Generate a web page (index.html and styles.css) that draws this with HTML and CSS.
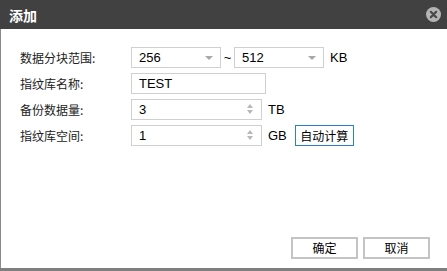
FILE: index.html
```html
<!DOCTYPE html>
<html lang="zh-CN">
<head>
    <meta charset="UTF-8">
    <title>添加</title>
    <link rel="stylesheet" href="styles.css">
</head>
<body>
    <div class="dialog">
        <div class="dialog__header">
            <span class="dialog__title">添加</span>
            <span class="dialog__close">
                <svg width="15" height="15" viewBox="0 0 15 15">
                    <circle cx="7.5" cy="7.5" r="7.5" fill="#b4b4b4"/>
                    <path d="M4.8 4.8 L10.2 10.2 M10.2 4.8 L4.8 10.2" stroke="#474747" stroke-width="2.2" stroke-linecap="round"/>
                </svg>
            </span>
        </div>
        <div class="dialog__body">
            <div class="form">
                <div class="form__row">
                    <label class="form__label">数据分块范围:</label>
                    <div class="field field--select">
                        <span class="field__value">256</span>
                        <span class="field__arrow"></span>
                    </div>
                    <span class="form__tilde">~</span>
                    <div class="field field--select">
                        <span class="field__value">512</span>
                        <span class="field__arrow"></span>
                    </div>
                    <span class="form__unit">KB</span>
                </div>
                <div class="form__row">
                    <label class="form__label">指纹库名称:</label>
                    <div class="field field--text">
                        <span class="field__value">TEST</span>
                    </div>
                </div>
                <div class="form__row">
                    <label class="form__label">备份数据量:</label>
                    <div class="field field--number">
                        <span class="field__value">3</span>
                        <span class="field__spin"><i class="spin--up"></i><i class="spin--down"></i></span>
                    </div>
                    <span class="form__unit">TB</span>
                </div>
                <div class="form__row">
                    <label class="form__label">指纹库空间:</label>
                    <div class="field field--number">
                        <span class="field__value">1</span>
                        <span class="field__spin"><i class="spin--up"></i><i class="spin--down"></i></span>
                    </div>
                    <span class="form__unit">GB</span>
                    <button class="btn-auto">自动计算</button>
                </div>
            </div>
            <div class="dialog__footer">
                <button class="btn">确定</button>
                <button class="btn">取消</button>
            </div>
        </div>
    </div>
</body>
</html>
```

FILE: styles.css
```css
body {
    margin: 0;
    font-family: "Liberation Sans", "Noto Sans CJK SC", sans-serif;
    color: #000;
}
.dialog {
    display: flex;
    flex-direction: column;
    height: 100vh;
    box-sizing: border-box;
    border-bottom: 3px solid #7f7f7f;
    background: #fff;
}
.dialog__header {
    height: 29px;
    display: flex;
    align-items: center;
    justify-content: space-between;
    padding: 0 6px 0 9px;
    background-color: #414141;
}
.dialog__title {
    font-family: "Noto Sans CJK SC", sans-serif;
    font-size: 14px;
    font-weight: bold;
    color: #fff;
}
.dialog__close {
    display: flex;
}
.dialog__body {
    flex: 1;
    display: flex;
    flex-direction: column;
    justify-content: space-between;
    border-left: 1px solid #8a8a8a;
}
.form {
    display: flex;
    flex-direction: column;
    gap: 5px;
    padding: 18px 0 0 19px;
}
.form__row {
    display: flex;
    align-items: center;
    height: 21px;
}
.form__label {
    width: 111px;
    font-family: "Noto Sans CJK SC", sans-serif;
    font-size: 12px;
    color: #222;
}
.field {
    position: relative;
    box-sizing: border-box;
    height: 21px;
    border: 1px solid #d0d0d0;
    display: flex;
    align-items: center;
    padding-left: 7px;
    font-size: 13px;
}
.field--select {
    width: 90px;
}
.field--text {
    width: 135px;
}
.field--number {
    width: 131px;
}
.field__arrow {
    position: absolute;
    right: 7px;
    top: 8px;
    border-left: 4px solid transparent;
    border-right: 4px solid transparent;
    border-top: 4px solid #a8a8a8;
}
.field__spin {
    position: absolute;
    right: 8px;
    top: 4px;
    display: flex;
    flex-direction: column;
    gap: 2px;
}
.spin--up {
    border-left: 3px solid transparent;
    border-right: 3px solid transparent;
    border-bottom: 4px solid #b8b8b8;
}
.spin--down {
    border-left: 3px solid transparent;
    border-right: 3px solid transparent;
    border-top: 4px solid #b8b8b8;
}
.form__tilde {
    width: 13px;
    text-align: center;
    font-size: 13px;
}
.form__unit {
    margin-left: 6px;
    font-size: 13px;
}
.btn-auto {
    margin-left: 8px;
    width: 59px;
    height: 21px;
    padding: 0;
    border: 1px solid #2a7fce;
    background: #fff;
    font-family: "Noto Sans CJK SC", sans-serif;
    font-size: 12px;
    line-height: 1;
    color: #000;
}
.dialog__footer {
    display: flex;
    justify-content: flex-end;
    gap: 5px;
    padding: 0 17px 9px 0;
}
.btn {
    width: 67px;
    height: 22px;
    box-sizing: border-box;
    border: 2px solid #c4c4c4;
    background: #fff;
    font-family: "Noto Sans CJK SC", sans-serif;
    font-size: 12px;
    line-height: 1;
    color: #000;
}
```
